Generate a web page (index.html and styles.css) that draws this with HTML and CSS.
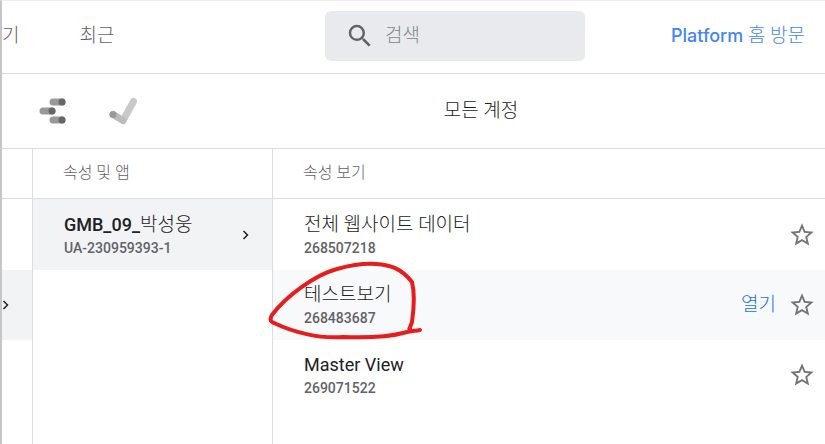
FILE: index.html
```
<!DOCTYPE html>
<html lang="ko">
<head>
    <meta charset="UTF-8">
    <meta name="viewport" content="width=device-width, initial-scale=1.0">
    <title>모든 계정</title>
    <link rel="stylesheet" href="styles.css">
</head>
<body>
    <header class="header">
        <nav class="tabs">
            <a href="#" class="tab">기</a>
            <a href="#" class="tab">최근</a>
        </nav>
        <label class="search">
            <svg class="search-icon" viewBox="0 0 24 24" role="img" aria-label="검색">
                <path d="M15.5 14h-.79l-.28-.27A6.47 6.47 0 0 0 16 9.5 6.5 6.5 0 1 0 9.5 16c1.61 0 3.09-.59 4.23-1.57l.27.28v.79l5 4.99L20.49 19l-4.99-5zm-6 0C7.01 14 5 11.99 5 9.5S7.01 5 9.5 5 14 7.01 14 9.5 11.99 14 9.5 14z"/>
            </svg>
            <input type="text" class="search-input" placeholder="검색">
        </label>
        <a href="#" class="home-link"><span class="brand">Platform</span> 홈 방문</a>
    </header>

    <div class="toolbar">
        <!-- 제품 아이콘 -->
        <svg class="product-icon" viewBox="0 0 28 28">
            <g fill="none" stroke="#999" stroke-width="7" stroke-linecap="round">
                <path d="M14 5h9M4 14h9M14 23h9"/>
            </g>
            <g fill="#666">
                <circle cx="23" cy="5" r="3.5"/>
                <circle cx="13" cy="14" r="3.5"/>
                <circle cx="23" cy="23" r="3.5"/>
            </g>
        </svg>
        <svg class="product-icon" viewBox="0 0 28 28">
            <path d="M14 23.500L24.500 4.500" fill="none" stroke="#c9c9c9" stroke-width="7" stroke-linecap="round"/>
            <path d="M4 17.500l10 6" fill="none" stroke="#bbb" stroke-width="7" stroke-linecap="round"/>
            <circle cx="4" cy="17.500" r="3.500" fill="#999"/>
        </svg>
        <h1 class="title">모든 계정</h1>
    </div>

    <main class="columns">
        <section class="column column-accounts">
            <div class="column-head"></div>
            <div class="row"></div>
            <div class="row selected">
                <svg class="chevron" viewBox="0 0 8 12"><path d="M1.500 2L5.500 6l-4 4"/></svg>
            </div>
        </section>

        <section class="column column-props">
            <h2 class="column-head">속성 및 앱</h2>
            <div class="row selected">
                <div class="info">
                    <div class="name latin strong">GMB_09_<span class="thin">박성웅</span></div>
                    <div class="code">UA-230959393-1</div>
                </div>
                <svg class="chevron" viewBox="0 0 8 12"><path d="M1.500 2L5.500 6l-4 4"/></svg>
            </div>
        </section>

        <section class="column column-views">
            <h2 class="column-head">속성 보기</h2>
            <div class="row">
                <div class="info">
                    <div class="name">전체 웹사이트 데이터</div>
                    <div class="code">268507218</div>
                </div>
                <button type="button" class="star" aria-label="즐겨찾기">
                    <svg viewBox="0 0 24 24"><path d="M22 9.240l-7.190-.62L12 2 9.190 8.630 2 9.240l5.460 4.730L5.820 21 12 17.270 18.180 21l-1.630-7.030L22 9.240zM12 15.400l-3.760 2.270 1-4.280-3.320-2.880 4.380-.38L12 6.100l1.710 4.040 4.380.38-3.320 2.880 1 4.280L12 15.400z"/></svg>
                </button>
            </div>
            <div class="row hovered">
                <div class="info">
                    <div class="name">테스트보기</div>
                    <div class="code">268483687</div>
                </div>
                <a href="#" class="open">열기</a>
                <button type="button" class="star" aria-label="즐겨찾기">
                    <svg viewBox="0 0 24 24"><path d="M22 9.240l-7.190-.62L12 2 9.190 8.630 2 9.240l5.460 4.730L5.820 21 12 17.270 18.180 21l-1.630-7.030L22 9.240zM12 15.400l-3.760 2.270 1-4.280-3.320-2.880 4.380-.38L12 6.100l1.710 4.040 4.380.38-3.320 2.880 1 4.280L12 15.400z"/></svg>
                </button>
                <!-- 손으로 그린 빨간 표시 -->
                <svg class="marker" viewBox="0 0 160 85">
                    <path d="M147 71C145 72 148 68 149 64C151 50 152 36 149 24C138 10 127 7 113 6C98 5 85 8 74 11C52 17 23 38 9 57C6 62 8 64 11 65C30 74 56 81 80 79C107 80 129 78 140 75C147 73 152 73 157 72"/>
                </svg>
            </div>
            <div class="row">
                <div class="info">
                    <div class="name latin">Master View</div>
                    <div class="code">269071522</div>
                </div>
                <button type="button" class="star" aria-label="즐겨찾기">
                    <svg viewBox="0 0 24 24"><path d="M22 9.240l-7.190-.62L12 2 9.190 8.630 2 9.240l5.460 4.730L5.820 21 12 17.270 18.180 21l-1.630-7.030L22 9.240zM12 15.400l-3.760 2.270 1-4.280-3.320-2.880 4.380-.38L12 6.100l1.710 4.040 4.380.38-3.320 2.880 1 4.280L12 15.400z"/></svg>
                </button>
            </div>
        </section>
    </main>
</body>
</html>
```
FILE: styles.css
```
* {
    box-sizing: border-box;
}

body {
    margin: 0;
    min-height: 100vh;
    display: flex;
    flex-direction: column;
    background-color: #fff;
    border-left: 2px solid #c6c6c6;
    border-top: 1px solid #eee;
    color: #202124;
    font-family: Roboto, "Noto Sans CJK KR", sans-serif;
    font-size: 19px;
    font-weight: 300;
    line-height: 24px;
}

a {
    text-decoration: none;
}

h1, h2 {
    margin: 0;
    font-weight: 300;
}

/* 상단 */
.header {
    display: flex;
    align-items: center;
    height: 73px;
    padding: 0 20px 2px 0;
    border-bottom: 1px solid #dadce0;
}

.tabs {
    display: flex;
    gap: 60px;
    flex: 0 1 323px;
}

.tab {
    color: #5f6368;
}

.search {
    display: flex;
    align-items: center;
    gap: 10px;
    flex: 0 1 260px;
    height: 50px;
    padding: 0 20px;
    border-radius: 6px;
    background-color: #e8eaed;
}

.search-icon {
    flex: none;
    width: 30px;
    height: 30px;
    fill: #5f6368;
}

.search-input {
    width: 100%;
    min-width: 0;
    padding: 0;
    border: none;
    outline: none;
    background: none;
    font: inherit;
}

.search-input::placeholder {
    color: #80868b;
}

.home-link {
    margin-left: auto;
    color: #4285f4;
}

.brand {
    font-family: Inter, sans-serif;
    font-size: 18px;
    font-weight: 500;
}

/* 제품 표시줄 */
.toolbar {
    display: flex;
    align-items: center;
    gap: 42px;
    height: 75px;
    padding: 0 42px 0 37px;
    border-bottom: 1px solid #dadce0;
}

.product-icon {
    flex: none;
    width: 28px;
    height: 28px;
}

.title {
    flex: 1;
    font-size: 19px;
    text-align: center;
}

/* 열 */
.columns {
    display: flex;
    flex: 1;
}

.column {
    border-right: 1px solid #dadce0;
}

.column-accounts {
    flex: 0 0 31px;
}

.column-props {
    flex: 0 0 240px;
}

.column-views {
    flex: 1;
    border-right: none;
}

.column-head {
    height: 50px;
    padding: 12px 30px;
    border-bottom: 1px solid #dadce0;
    color: #5f6368;
    font-size: 16px;
}

.row {
    position: relative;
    display: flex;
    align-items: center;
    height: 70px;
    padding: 0 9px 0 31px;
}

.column-head + .row {
    height: 71px;
    padding-top: 1px;
}

.column-accounts .column-head,
.column-accounts .row {
    padding: 0;
}

.column-props .row {
    padding-right: 22px;
}

.selected {
    background-color: #f1f3f4;
}

.hovered {
    background-color: #f8f9fa;
}

.info {
    flex: 1;
}

.name {
    line-height: 26px;
}

.latin {
    font-size: 18px;
    font-weight: 400;
}

.strong {
    font-weight: 500;
}

.thin {
    font-size: 19px;
    font-weight: 300;
}

.code {
    color: #5f6368;
    font-size: 14px;
    font-weight: 500;
    line-height: 20px;
}

.chevron {
    flex: none;
    width: 8px;
    height: 12px;
    fill: none;
    stroke: #202124;
    stroke-width: 1.5;
}

.open {
    margin-right: 12px;
    color: #1a73e8;
}

.star {
    flex: none;
    width: 28px;
    height: 28px;
    padding: 0;
    border: none;
    background: none;
    cursor: pointer;
}

.star svg {
    display: block;
    fill: #757575;
}

.marker {
    position: absolute;
    top: -12px;
    left: -10px;
    width: 160px;
    height: 85px;
    fill: none;
    stroke: #e81c1c;
    stroke-width: 4;
    stroke-linecap: round;
    stroke-linejoin: round;
    pointer-events: none;
}
```
